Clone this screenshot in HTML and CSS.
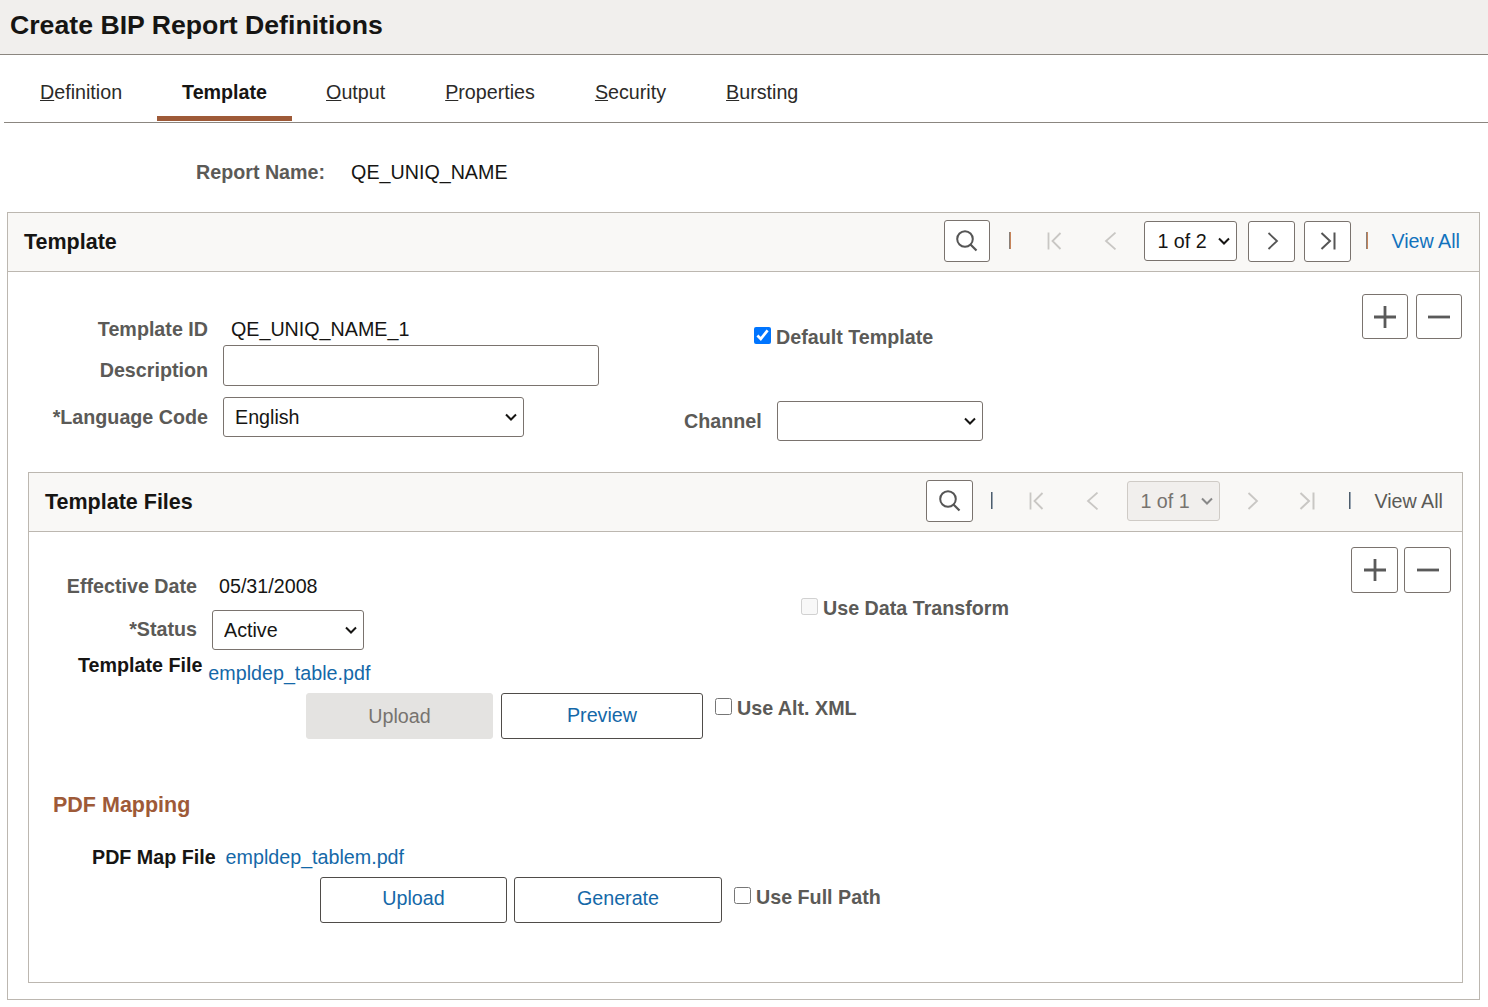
FILE: index.html
```html
<!DOCTYPE html>
<html lang="en">
<head>
<meta charset="utf-8">
<title>Create BIP Report Definitions</title>
<link rel="stylesheet" href="styles.css">
</head>
<body>
<svg class="defs" width="0" height="0" aria-hidden="true">
  <symbol id="i-search" viewBox="0 0 22 22"><circle cx="9" cy="9" r="7.800" fill="none" stroke="currentColor" stroke-width="2"/><path d="M14.500 14.500 20.500 20.500" fill="none" stroke="currentColor" stroke-width="2.200"/></symbol>
  <symbol id="i-first" viewBox="0 0 18 18"><path d="M2.500 .5v17M14.500 1 6.500 9l8 8" fill="none" stroke="currentColor" stroke-width="1.800"/></symbol>
  <symbol id="i-prev" viewBox="0 0 18 18"><path d="M13.500 .6 4 9l9.500 8.400" fill="none" stroke="currentColor" stroke-width="1.800"/></symbol>
  <symbol id="i-next" viewBox="0 0 18 18"><path d="M5.500 1l8.500 8-8.500 8" fill="none" stroke="currentColor" stroke-width="1.800"/></symbol>
  <symbol id="i-last" viewBox="0 0 18 18"><path d="M2.500 1l8.500 8-8.500 8M15.500 .5v17" fill="none" stroke="currentColor" stroke-width="2"/></symbol>
  <symbol id="i-plus" viewBox="0 0 24 24"><path d="M12 1v22M1 12h22" fill="none" stroke="currentColor" stroke-width="2.800"/></symbol>
  <symbol id="i-minus" viewBox="0 0 24 24"><path d="M1 12h22" fill="none" stroke="currentColor" stroke-width="2.800"/></symbol>
</svg>

<header class="page-title"><h1>Create BIP Report Definitions</h1></header>

<nav class="tabs">
  <a class="tab"><u>D</u>efinition</a>
  <a class="tab tab-active">Template</a>
  <a class="tab"><u>O</u>utput</a>
  <a class="tab"><u>P</u>roperties</a>
  <a class="tab"><u>S</u>ecurity</a>
  <a class="tab"><u>B</u>ursting</a>
</nav>

<div class="report-row"><span class="lbl report-lbl">Report Name:</span><span class="val">QE_UNIQ_NAME</span></div>

<section class="panel outer">
  <div class="panel-head">
    <h2>Template</h2>
    <div class="pager">
      <button class="icon-btn search-btn"><svg class="ic-search"><use href="#i-search"/></svg></button>
      <span class="sep sep-a"></span>
      <span class="nav-ic gap-a"><svg><use href="#i-first"/></svg></span>
      <span class="nav-ic gap-b"><svg><use href="#i-prev"/></svg></span>
      <select class="sel page-sel"><option>1 of 2</option></select>
      <button class="icon-btn nav-btn next-btn"><svg><use href="#i-next"/></svg></button>
      <button class="icon-btn nav-btn"><svg><use href="#i-last"/></svg></button>
      <span class="sep sep-b"></span>
      <a class="link view-all">View All</a>
    </div>
  </div>
  <div class="outer-body">
    <div class="add-del top-ad">
      <button class="square"><svg><use href="#i-plus"/></svg></button>
      <button class="square"><svg><use href="#i-minus"/></svg></button>
    </div>
    <div class="tmpl-form">
      <div class="col-left">
        <div class="row r-id"><span class="lbl w-a">Template ID</span><span class="val id-val">QE_UNIQ_NAME_1</span></div>
        <div class="row r-desc"><span class="lbl w-a">Description</span><input class="text-in" type="text"></div>
        <div class="row r-lang"><span class="lbl w-a">*Language Code</span><select class="sel lang-sel"><option>English</option></select></div>
      </div>
      <div class="col-right">
        <label class="check def-check"><input type="checkbox" checked><span class="lbl">Default Template</span></label>
        <div class="row r-chan"><span class="lbl">Channel</span><select class="sel chan-sel"><option></option></select></div>
      </div>
    </div>

    <section class="panel inner">
      <div class="panel-head">
        <h2>Template Files</h2>
        <div class="pager pager-inner">
          <button class="icon-btn"><svg class="ic-search"><use href="#i-search"/></svg></button>
          <span class="sep sep-a"></span>
          <span class="nav-ic gap-a"><svg><use href="#i-first"/></svg></span>
          <span class="nav-ic gap-b"><svg><use href="#i-prev"/></svg></span>
          <select class="sel page-sel muted" disabled><option>1 of 1</option></select>
          <span class="nav-ic gap-c"><svg><use href="#i-next"/></svg></span>
          <span class="nav-ic gap-d"><svg><use href="#i-last"/></svg></span>
          <span class="sep sep-c"></span>
          <a class="view-all plain">View All</a>
        </div>
      </div>
      <div class="inner-body">
        <div class="add-del inner-ad">
          <button class="square"><svg><use href="#i-plus"/></svg></button>
          <button class="square"><svg><use href="#i-minus"/></svg></button>
        </div>
        <div class="row r-eff"><span class="lbl w-b">Effective Date</span><span class="val eff-val">05/31/2008</span>
          <label class="check dt-check"><input type="checkbox" disabled><span class="lbl">Use Data Transform</span></label></div>
        <div class="row r-status"><span class="lbl w-b status-lbl">*Status</span><select class="sel status-sel"><option>Active</option></select></div>
        <div class="row r-file"><span class="lbl black file-lbl">Template File</span><a class="link file-link">empldep_table.pdf</a></div>
        <div class="row r-btns">
          <button class="btn btn-dis up1">Upload</button>
          <button class="btn prev">Preview</button>
          <label class="check alt-check"><input type="checkbox"><span class="lbl">Use Alt. XML</span></label>
        </div>
        <h3 class="pdf-head">PDF Mapping</h3>
        <div class="row r-map"><span class="lbl black map-lbl">PDF Map File</span><a class="link map-link">empldep_tablem.pdf</a></div>
        <div class="row r-btns2">
          <button class="btn up2">Upload</button>
          <button class="btn gen">Generate</button>
          <label class="check path-check"><input type="checkbox"><span class="lbl">Use Full Path</span></label>
        </div>
      </div>
    </section>
  </div>
</section>
</body>
</html>
```

FILE: styles.css
```css
* { box-sizing: border-box; }
html, body { margin: 0; padding: 0; }
body { font-family: "Liberation Sans", Arial, sans-serif; font-size: 19.7px; color: #161513; background: #fff; height: 1007px; overflow: hidden; }
.defs { position: absolute; }
.page-title { height: 55px; background: #f1efed; border-bottom: 1px solid #8b8680; padding: 7px 10px 0; }
h1 { margin: 0; font-size: 26.67px; line-height: 36px; font-weight: 700; color: #161513; }
.tabs { display: flex; height: 68px; margin: 0 0 0 4px; border-bottom: 1px solid #8b8680; padding-left: 10px; }
.tab { height: 66px; display: flex; align-items: center; padding: 8px 26px 0 26px; margin-right: 8px; color: #2b2a28; font-size: 19.7px; }
.tab-active { font-weight: 700; color: #161513; border-bottom: 5px solid #9e5a38; padding: 14px 25px 0; margin-left: 1px; margin-right: 8px; }
.report-row { display: flex; align-items: center; height: 89px; padding: 10px 0 0 196px; }
.lbl { font-weight: 700; color: #5b5a57; }
.black { color: #161513; }
.val { color: #161513; }
.report-row .val { margin-left: 26px; }
.panel { border: 1px solid #bcb7b0; }
.outer { margin: 0 8px 0 7px; height: 788px; }
.panel-head { height: 59px; background: #f9f8f6; border-bottom: 1px solid #bcb7b0; display: flex; align-items: center; justify-content: space-between; padding: 0 19px 0 16px; }
h2 { margin: 0; font-size: 21.5px; font-weight: 700; color: #161513; }
.pager { display: flex; align-items: center; margin-top: -3px; }
.icon-btn { width: 47px; height: 42px; border: 1px solid #7a736e; border-radius: 3px; background: #fff; color: #555; padding: 0; display: flex; align-items: center; justify-content: center; flex: none; }
.search-btn { width: 46px; }
.ic-search { width: 22px; height: 22px; }
.nav-btn svg { width: 18px; height: 18px; }
.nav-btn { margin-left: 9px; height: 41px; margin-top: 1px; }
.next-btn { margin-left: 11px; }
.sep { width: 2px; height: 17px; background: linear-gradient(90deg, #8a8078 50%, #c6845a 50%); }
.pager-inner .sep { background: linear-gradient(90deg, #4e5d6c 50%, #9aa6b2 50%); }
.sep-a { margin: 0 18px 0 19px; }
.pager-inner .sep-a { margin: 0 18px 0 18px; }
.sep-b { margin: 0 23px 0 15px; }
.sep-c { margin: 0 23px 0 33px; }
.nav-ic { width: 18px; height: 18px; color: #c9c7c4; display: block; }
.nav-ic svg { width: 18px; height: 18px; display: block; }
.gap-a { margin-left: 17px; }
.gap-b { margin-left: 38px; margin-right: 24px; }
.pager-inner .gap-b { margin-right: 25px; }
.gap-c { margin-left: 23px; }
.gap-d { margin-left: 37px; }
.sel { appearance: none; font-family: inherit; font-size: 19.7px; height: 40px; border: 1px solid #7a736e; border-radius: 3px; color: #161513; padding: 0 24px 0 11px; background: #fff url("data:image/svg+xml,%3Csvg xmlns='http://www.w3.org/2000/svg' width='12' height='8' viewBox='0 0 12 8'%3E%3Cpath d='M1 1.500 6 6.500 11 1.500' fill='none' stroke='%23161513' stroke-width='2'/%3E%3C/svg%3E") no-repeat right 6px center; }
.page-sel { width: 93px; padding-left: 12px; }
.muted { color: #77736f; background-color: #f1efed; border-color: #cfcbc6; opacity: 1; background-image: url("data:image/svg+xml,%3Csvg xmlns='http://www.w3.org/2000/svg' width='12' height='8' viewBox='0 0 12 8'%3E%3Cpath d='M1 1.500 6 6.500 11 1.500' fill='none' stroke='%23888' stroke-width='2'/%3E%3C/svg%3E"); }
.link { color: #1468a8; }
.view-all { font-size: 19.7px; margin-top: 1px; }
.pager .link { color: #1272bd; }
.plain { color: #5b5a57; }
.outer-body { position: relative; padding: 0 16px 0 20px; }
.add-del { display: flex; gap: 8px; position: absolute; }
.top-ad { top: 22px; right: 17px; }
.square { width: 46px; height: 45px; border: 1px solid #7a736e; border-radius: 3px; background: #fff; color: #5a5a5a; padding: 0; display: flex; align-items: center; justify-content: center; }
.square svg { width: 24px; height: 24px; }
.tmpl-form { display: flex; height: 200px; }
.col-left { width: 725px; padding-top: 42px; }
.row { display: flex; align-items: center; }
.w-a { width: 180px; text-align: right; flex: none; }
.r-id { height: 30px; }
.id-val { margin-left: 23px; }
.r-desc { height: 41px; margin-top: 1px; }
.r-desc .lbl { margin-top: 10px; }
.text-in { width: 376px; height: 41px; margin-left: 15px; border: 1px solid #7a736e; border-radius: 3px; font-size: 19.7px; }
.r-lang { margin-top: 11px; height: 40px; }
.lang-sel { width: 301px; margin-left: 15px; }
.col-right { padding-top: 50px; }
.check { display: flex; align-items: center; }
.check input { width: 17px; height: 17px; margin: -4px 5px 0 0; flex: none; }
.def-check { margin-left: 1px; height: 30px; }
.r-chan { margin-top: 49px; margin-left: -69px; height: 40px; }
.chan-sel { width: 206px; margin-left: 15px; }
.inner { height: 511px; }
.inner-body { position: relative; padding-top: 39px; }
.inner-ad { top: 15px; right: 11px; gap: 6px; }
.inner-ad .square { height: 46px; width: 47px; }
.w-b { width: 168px; text-align: right; flex: none; }
.r-eff { height: 30px; position: relative; }
.eff-val { margin-left: 22px; }
.dt-check { position: absolute; left: 772px; top: 26px; }
.r-status { height: 40px; margin-top: 9px; }
.status-lbl { margin-top: -2px; }
.status-sel { width: 152px; margin-left: 15px; }
.r-file { height: 30px; margin-top: 1px; padding-left: 49px; }
.file-lbl { margin-top: -2px; }
.file-link { margin-left: 6px; margin-top: 14px; }
.r-btns { margin-top: 12px; height: 46px; padding-left: 277px; }
.btn { font-family: inherit; font-size: 19.7px; height: 46px; border: 1px solid #4f4c49; border-radius: 3px; background: #fff; color: #1468a8; padding: 0; }
.btn-dis { background: #e4e3e1; border-color: #e4e3e1; color: #77736f; }
.up1 { width: 187px; }
.prev { width: 202px; margin-left: 8px; padding-bottom: 2px; }
.alt-check { margin: -15px 0 0 12px; }
.pdf-head { margin: 51px 0 0 24px; font-size: 21.5px; line-height: 30px; color: #9e5a38; font-weight: 700; }
.r-map { height: 30px; margin-top: 22px; padding-left: 63px; }
.map-link { margin-left: 10px; }
.r-btns2 { margin-top: 5px; height: 46px; padding-left: 291px; }
.up2 { width: 187px; padding-bottom: 4px; }
.gen { width: 208px; margin-left: 7px; padding-bottom: 4px; }
.path-check { margin: -6px 0 0 12px; }
```
